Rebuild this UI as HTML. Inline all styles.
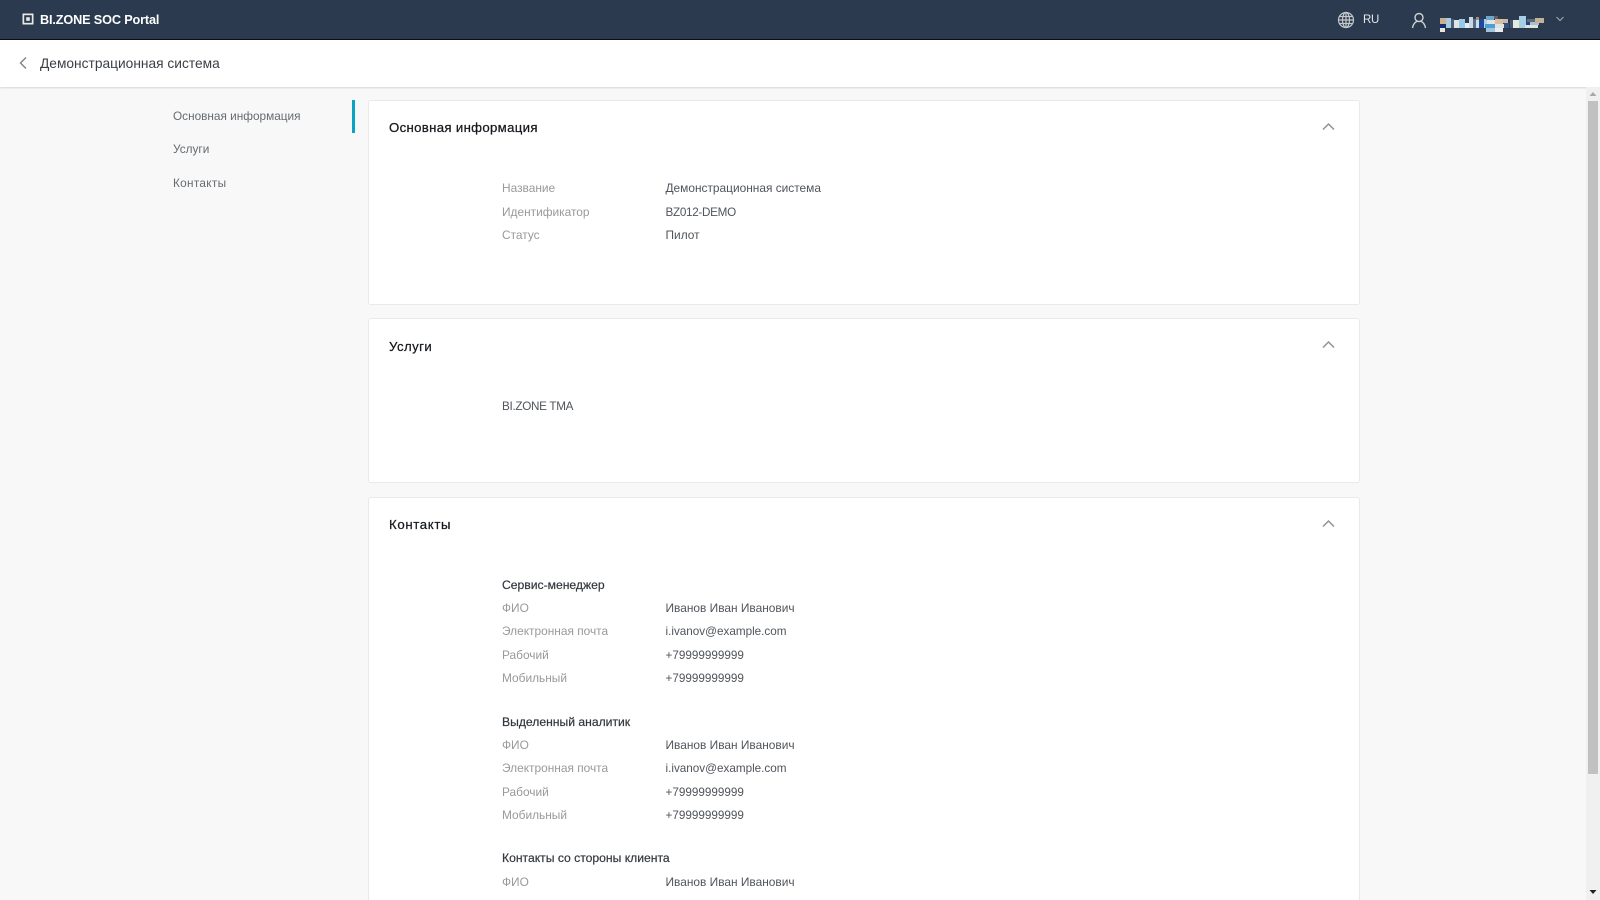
<!DOCTYPE html>
<html lang="ru">
<head>
<meta charset="utf-8">
<title>BI.ZONE SOC Portal</title>
<style>
html,body{margin:0;padding:0;width:1600px;height:900px;overflow:hidden;background:#f8f8f8;font-family:"Liberation Sans",Arial,sans-serif;}
#root{position:relative;width:1600px;height:900px;overflow:hidden;background:#f8f8f8;}
#root div,#root svg{position:absolute;}
.t{white-space:nowrap;font-size:11.9px;line-height:16px;height:16px;}
.l{left:502px;color:#999;}
.v{left:665.5px;color:#50555b;}
.n{font-size:11.7px;}
.x{font-size:11.7px;letter-spacing:-.3px;}
.h{left:502px;color:#33383e;font-size:12.15px;-webkit-text-stroke:.2px #33383e;}
.card{left:368px;width:992px;background:#fff;border:1px solid #e9e9e9;border-radius:3px;box-sizing:border-box;}
.ct{left:389px;font-size:13.2px;letter-spacing:.33px;color:#16191d;-webkit-text-stroke:.25px #16191d;white-space:nowrap;line-height:16px;height:16px;}
.nav{left:173px;font-size:11.8px;color:#666b70;white-space:nowrap;line-height:16px;height:16px;}
</style>
</head>
<body>
<div id="root">
<div style="left:0;top:0;width:1600px;height:39px;background:#2b3a4e;"></div>
<div style="left:0;top:39px;width:1600px;height:1px;background:#0c0f14;"></div>
<svg style="left:22px;top:13px" width="12" height="12" viewBox="0 0 12 12"><rect x="0.5" y="0.5" width="11" height="11" fill="#e8e8e8"/><rect x="2.2" y="2.2" width="7.6" height="7.6" fill="#2b3a4e"/><rect x="4.2" y="4.2" width="3.6" height="3.6" fill="#e8e8e8"/></svg>
<div class="t" style="left:40px;top:12px;color:#fff;font-size:12.7px;font-weight:700;letter-spacing:-.15px;">BI.ZONE SOC Portal</div>
<svg style="left:1337px;top:11px" width="18" height="18" viewBox="0 0 18 18" fill="none" stroke="#c4c8cc" stroke-width="1.2"><circle cx="9" cy="9" r="7.500"/><ellipse cx="9" cy="9" rx="3.500" ry="7.500"/><path d="M9 1.500V16.500M1.500 9H16.500M2.500 5.500H15.500M2.500 12.500H15.500"/></svg>
<div class="t" style="left:1363px;top:12px;color:#e6e8ea;font-size:11.5px;letter-spacing:-.3px;">RU</div>
<svg style="left:1411px;top:12px" width="16" height="17" viewBox="0 0 16 17" fill="none" stroke="#d0d3d6" stroke-width="1.400"><circle cx="8" cy="5.500" r="4"/><path d="M1.500 16C2 12.500 4 10 6 9.300M14.500 16C14 12.500 12 10 10 9.300"/></svg>
<svg style="left:1440px;top:16px" width="104" height="17" viewBox="0 0 104 17" shape-rendering="crispEdges">
<rect x="0" y="2" width="6" height="6" fill="#c8b090"/><rect x="6" y="2" width="5" height="10" fill="#a9cbe0"/><rect x="0" y="8" width="6" height="4" fill="#123070"/><rect x="0" y="12" width="5" height="4" fill="#e6e6de"/>
<rect x="11" y="3" width="3" height="9" fill="#4a5f7c"/><rect x="14" y="4" width="5" height="8" fill="#dfe6e6"/><rect x="19" y="3" width="6" height="9" fill="#98c8e6"/><rect x="25" y="7" width="5" height="5" fill="#e6ecef"/><rect x="29" y="1" width="4" height="11" fill="#c8d8e4"/>
<rect x="33" y="3" width="3" height="9" fill="#5a6d85"/><rect x="36" y="1" width="3" height="3" fill="#a88b80"/><rect x="36" y="4" width="3" height="8" fill="#c9dfee"/><rect x="39" y="3" width="5" height="9" fill="#1f4a9a"/><rect x="44" y="3" width="4" height="9" fill="#b5cfe4"/>
<rect x="46" y="0" width="8" height="4" fill="#6ea7cc"/><rect x="47" y="4" width="8" height="4" fill="#dfe4e6"/><rect x="45" y="8" width="10" height="4" fill="#4d9fd0"/><rect x="46" y="12" width="9" height="4" fill="#9fc5de"/><rect x="54" y="0" width="4" height="3" fill="#6b5c5c"/>
<rect x="55" y="3" width="8" height="5" fill="#d8c0a4"/><rect x="63" y="3" width="5" height="4" fill="#c8b8a8"/><rect x="55" y="12" width="8" height="4" fill="#e8eaec"/><rect x="55" y="8" width="9" height="4" fill="#e0e2e0"/><rect x="64" y="7" width="5" height="5" fill="#35507e"/>
<rect x="70" y="4" width="3" height="8" fill="#3f5878"/><rect x="73" y="4" width="6" height="8" fill="#e8eadc"/><rect x="79" y="0" width="7" height="12" fill="#a6cfe6"/><rect x="86" y="5" width="4" height="4" fill="#23448c"/>
<rect x="87" y="3" width="8" height="3" fill="#5c6a7e"/><rect x="90" y="6" width="9" height="3" fill="#a9bfd2"/><rect x="85" y="9" width="13" height="3" fill="#dfe4d8"/><rect x="95" y="2" width="9" height="5" fill="#c4b098"/>
</svg>
<svg style="left:1555px;top:16px" width="10" height="6" viewBox="0 0 10 6" fill="none" stroke="#9aa3ad" stroke-width="1.200"><path d="M1.500 1L5 4.500L8.500 1"/></svg>

<div style="left:0;top:40px;width:1600px;height:47px;background:#fff;box-shadow:0 1px 2px rgba(0,0,0,.14);"></div>
<svg style="left:18px;top:56px" width="10" height="14" viewBox="0 0 10 14" fill="none" stroke="#7d8288" stroke-width="1.400"><path d="M8 1.500L2.500 7L8 12.500"/></svg>
<div class="t" style="left:40px;top:56px;font-size:13.75px;color:#3b4046;">Демонстрационная система</div>

<div class="nav" style="top:108px">Основная информация</div>
<div class="nav" style="top:141px">Услуги</div>
<div class="nav" style="top:175px;letter-spacing:.3px">Контакты</div>
<div style="left:352px;top:100px;width:3px;height:33px;background:#0aa3c2;"></div>

<div class="card" style="top:100px;height:205px;"></div>
<div class="ct" style="top:120px">Основная информация</div>
<svg style="left:1322px;top:122px" width="13" height="9" viewBox="0 0 13 9" fill="none" stroke="#8f9499" stroke-width="1.500"><path d="M1 7.500L6.500 2L12 7.500"/></svg>
<div class="t l" style="top:180px">Название</div><div class="t v" style="top:180px">Демонстрационная система</div>
<div class="t l" style="top:204px">Идентификатор</div><div class="t v x" style="top:205px">BZ012-DEMO</div>
<div class="t l" style="top:227px">Статус</div><div class="t v" style="top:227px">Пилот</div>

<div class="card" style="top:318px;height:165px;"></div>
<div class="ct" style="top:339px;letter-spacing:.45px">Услуги</div>
<svg style="left:1322px;top:340px" width="13" height="9" viewBox="0 0 13 9" fill="none" stroke="#8f9499" stroke-width="1.500"><path d="M1 7.500L6.500 2L12 7.500"/></svg>
<div class="t v x" style="left:502px;top:399px">BI.ZONE TMA</div>

<div class="card" style="top:497px;height:420px;"></div>
<div class="ct" style="top:517px;letter-spacing:.65px">Контакты</div>
<svg style="left:1322px;top:519px" width="13" height="9" viewBox="0 0 13 9" fill="none" stroke="#8f9499" stroke-width="1.500"><path d="M1 7.500L6.500 2L12 7.500"/></svg>

<div class="t h" style="top:577px">Сервис-менеджер</div>
<div class="t l" style="top:600px">ФИО</div><div class="t v" style="top:600px">Иванов Иван Иванович</div>
<div class="t l" style="top:623px">Электронная почта</div><div class="t v n" style="top:624px">i.ivanov@example.com</div>
<div class="t l" style="top:647px">Рабочий</div><div class="t v n" style="top:648px">+79999999999</div>
<div class="t l" style="top:670px">Мобильный</div><div class="t v n" style="top:671px">+79999999999</div>

<div class="t h" style="top:714px">Выделенный аналитик</div>
<div class="t l" style="top:737px">ФИО</div><div class="t v" style="top:737px">Иванов Иван Иванович</div>
<div class="t l" style="top:760px">Электронная почта</div><div class="t v n" style="top:761px">i.ivanov@example.com</div>
<div class="t l" style="top:784px">Рабочий</div><div class="t v n" style="top:785px">+79999999999</div>
<div class="t l" style="top:807px">Мобильный</div><div class="t v n" style="top:808px">+79999999999</div>

<div class="t h" style="top:850px">Контакты со стороны клиента</div>
<div class="t l" style="top:874px">ФИО</div><div class="t v" style="top:874px">Иванов Иван Иванович</div>

<div style="left:1586px;top:87px;width:14px;height:813px;background:#f0f0f0;"></div>
<div style="left:1588px;top:101px;width:10px;height:673px;background:#c1c1c1;"></div>
<svg style="left:1589px;top:91px" width="8" height="6" viewBox="0 0 8 6"><path d="M4 1L7.500 5H.5Z" fill="#a8a8a8"/></svg>
<svg style="left:1589px;top:889px" width="8" height="6" viewBox="0 0 8 6"><path d="M.5 1H7.500L4 5Z" fill="#222"/></svg>
</div>
</body>
</html>
